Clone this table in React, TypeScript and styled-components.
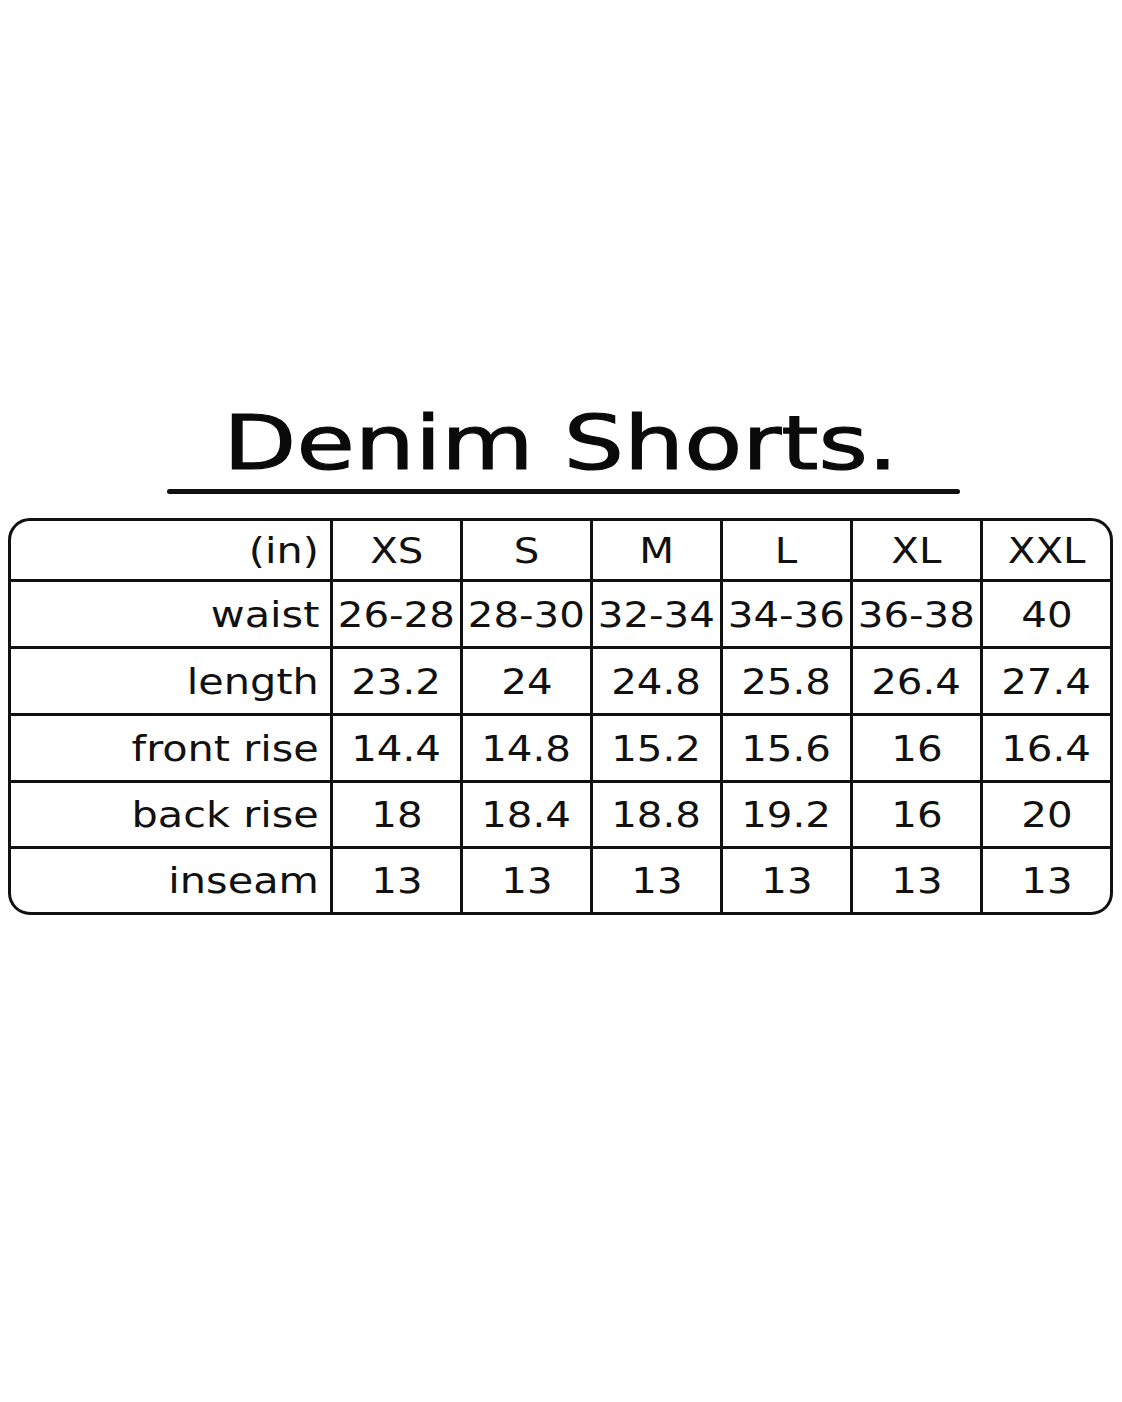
import React from 'react'
import styled, { createGlobalStyle } from 'styled-components'

const GlobalStyle = createGlobalStyle`
  html, body {
    margin: 0;
    padding: 0;
    background: #fff;
  }
  body {
    font-family: "DejaVu Sans", "Liberation Sans", sans-serif;
    color: #111;
  }
`

const Page = styled.div`
  width: 1122px;
  min-height: 1402px;
  box-sizing: border-box;
  padding: 406px 9px 0 8px;
  display: flex;
  flex-direction: column;
  align-items: center;
`

const Title = styled.h1`
  margin: 0;
  font-size: 75px;
  font-weight: normal;
  line-height: 1;
  height: 75px;
  color: #0a0a0a;
  -webkit-text-stroke: 1.2px #0a0a0a;
  white-space: nowrap;
  transform: scaleX(1.265);
`

const Underline = styled.div`
  width: 793px;
  height: 5px;
  margin: 8px 0 0 5px;
  background: #111;
  border-radius: 3px;
`

const Chart = styled.div`
  margin-top: 24px;
  width: 1105px;
  box-sizing: border-box;
  border: 3px solid #111;
  border-radius: 22px;
  overflow: hidden;
  background: #111;
  display: grid;
  grid-template-columns: 319px repeat(6, 1fr);
  grid-template-rows: 58px 64px 64px 64px 63px 63px;
  gap: 3px;
`

const Cell = styled.div<{ $label?: boolean }>`
  background: #fff;
  display: flex;
  align-items: center;
  justify-content: ${(p) => (p.$label ? 'flex-end' : 'center')};
  padding-right: ${(p) => (p.$label ? '11px' : '0')};
  font-size: 36px;
  color: #111;
  white-space: nowrap;
  overflow: hidden;
`

const Txt = styled.span<{ $label?: boolean }>`
  display: inline-block;
  transform: scaleX(${(p) => (p.$label ? 1.15 : 1.12)});
  transform-origin: ${(p) => (p.$label ? 'right center' : 'center')};
`

const sizes = ['XS', 'S', 'M', 'L', 'XL', 'XXL']

const rows: [string, string[]][] = [
  ['waist', ['26-28', '28-30', '32-34', '34-36', '36-38', '40']],
  ['length', ['23.2', '24', '24.8', '25.8', '26.4', '27.4']],
  ['front rise', ['14.4', '14.8', '15.2', '15.6', '16', '16.4']],
  ['back rise', ['18', '18.4', '18.8', '19.2', '16', '20']],
  ['inseam', ['13', '13', '13', '13', '13', '13']],
]

export default function App() {
  return (
    <>
      <GlobalStyle />
      <Page>
        <Title>Denim Shorts.</Title>
        <Underline />
        <Chart>
          <Cell $label>
            <Txt $label>(in)</Txt>
          </Cell>
          {sizes.map((s) => (
            <Cell key={s}>
              <Txt>{s}</Txt>
            </Cell>
          ))}
          {rows.map(([label, values]) => (
            <React.Fragment key={label}>
              <Cell $label>
                <Txt $label>{label}</Txt>
              </Cell>
              {values.map((v, i) => (
                <Cell key={label + i}>
                  <Txt>{v}</Txt>
                </Cell>
              ))}
            </React.Fragment>
          ))}
        </Chart>
      </Page>
    </>
  )
}
